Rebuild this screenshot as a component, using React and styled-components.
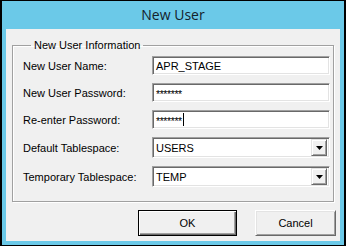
import React from "react";
import styled, { createGlobalStyle } from "styled-components";

const GlobalStyle = createGlobalStyle`
  html, body {
    margin: 0;
    padding: 0;
    background: #000;
  }
  * {
    box-sizing: border-box;
  }
`;

const Window = styled.div`
  width: 346px;
  height: 246px;
  border: 1px solid #000;
  border-left-width: 2px;
  border-right-width: 2px;
  background: #6bc9e8;
  display: flex;
  flex-direction: column;
  padding: 0 4px 4px 4px;
`;

const TitleBar = styled.div`
  height: 28px;
  display: flex;
  align-items: center;
  justify-content: center;
  font-family: "Open Sans", "Noto Sans", sans-serif;
  font-size: 14px;
  color: #14222b;
  padding-bottom: 1px;
`;

const Client = styled.div`
  flex: 1;
  background: #f0f0f0;
  display: flex;
  flex-direction: column;
  padding: 11px 6px 0 6px;
  font-family: "Liberation Sans", Arial, sans-serif;
  font-size: 11px;
  color: #000;
`;

const GroupBox = styled.fieldset`
  margin: 0;
  padding: 5px 4px 14px 10px;
  border: 1px solid #a0a0a0;
  box-shadow: inset 1px 1px 0 #fff, 1px 1px 0 #fff;
  min-width: 0;
`;

const Legend = styled.legend`
  padding: 0 3px;
  margin-left: 8px;
  line-height: 11px;
  font-size: 11px;
`;

const FieldGrid = styled.div`
  display: grid;
  grid-template-columns: 129px 178px;
  row-gap: 8px;
  align-items: center;
`;

const Label = styled.label`
  white-space: nowrap;
`;

const Sunken = styled.div`
  height: ${(p) => (p.$combo ? 21 : 19)}px;
  background: #fff;
  border-top: 1px solid #a0a0a0;
  border-left: 1px solid #a0a0a0;
  border-right: 1px solid #fff;
  border-bottom: 1px solid #fff;
  box-shadow: inset 1px 1px 0 #696969, inset -1px -1px 0 #e3e3e3;
  display: flex;
  align-items: center;
  padding: 0 2px 0 3px;
  font-size: 11px;
  white-space: nowrap;
`;

const Value = styled.span`
  flex: 1;
  display: flex;
  align-items: center;
`;

const Stars = styled.span`
  font-size: 10.5px;
  letter-spacing: -0.4px;
  position: relative;
  top: 1px;
`;

const Caret = styled.span`
  display: inline-block;
  width: 1px;
  height: 13px;
  background: #000;
  margin-left: 1px;
`;

const ArrowButton = styled.div`
  width: 16px;
  height: 17px;
  background: #f0f0f0;
  border-top: 1px solid #e3e3e3;
  border-left: 1px solid #e3e3e3;
  border-right: 1px solid #696969;
  border-bottom: 1px solid #696969;
  box-shadow: inset 1px 1px 0 #fff, inset -1px -1px 0 #a0a0a0;
  display: flex;
  align-items: center;
  justify-content: center;
`;

const ButtonRow = styled.div`
  display: flex;
  justify-content: flex-end;
  gap: 18px;
  padding: 8px 0 0 0;
  margin-right: -2px;
`;

const Button = styled.button`
  width: ${(p) => p.$width}px;
  height: 26px;
  background: #f0f0f0;
  font-family: "Liberation Sans", Arial, sans-serif;
  font-size: 11px;
  color: #000;
  padding: 0;
  border-top: 1px solid ${(p) => (p.$default ? "#000" : "#fff")};
  border-left: 1px solid ${(p) => (p.$default ? "#000" : "#fff")};
  border-right: 1px solid ${(p) => (p.$default ? "#000" : "#696969")};
  border-bottom: 1px solid ${(p) => (p.$default ? "#000" : "#696969")};
  box-shadow: ${(p) =>
    p.$default
      ? "inset 1px 1px 0 #fff, inset -1px -1px 0 #696969, inset -2px -2px 0 #a0a0a0"
      : "inset 1px 1px 0 #e3e3e3, inset -1px -1px 0 #a0a0a0"};
`;

const DownArrow = () => (
  <svg width="7" height="4" viewBox="0 0 7 4">
    <path d="M0 0h7L3.5 4z" fill="#000" />
  </svg>
);

const fields = [
  { label: "New User Name:", kind: "text", value: "APR_STAGE" },
  { label: "New User Password:", kind: "password", value: "*******" },
  { label: "Re-enter Password:", kind: "password", value: "*******", caret: true },
  { label: "Default Tablespace:", kind: "combo", value: "USERS" },
  { label: "Temporary Tablespace:", kind: "combo", value: "TEMP" },
];

export default function App() {
  return (
    <>
      <GlobalStyle />
      <Window>
        <TitleBar>New User</TitleBar>
        <Client>
          <GroupBox>
            <Legend>New User Information</Legend>
            <FieldGrid>
              {fields.map((f) => (
                <React.Fragment key={f.label}>
                  <Label>{f.label}</Label>
                  <Sunken $combo={f.kind === "combo"}>
                    <Value>
                      {f.kind === "password" ? <Stars>{f.value}</Stars> : f.value}
                      {f.caret && <Caret />}
                    </Value>
                    {f.kind === "combo" && (
                      <ArrowButton>
                        <DownArrow />
                      </ArrowButton>
                    )}
                  </Sunken>
                </React.Fragment>
              ))}
            </FieldGrid>
          </GroupBox>
          <ButtonRow>
            <Button $default $width={99}>OK</Button>
            <Button $width={81}>Cancel</Button>
          </ButtonRow>
        </Client>
      </Window>
    </>
  );
}
